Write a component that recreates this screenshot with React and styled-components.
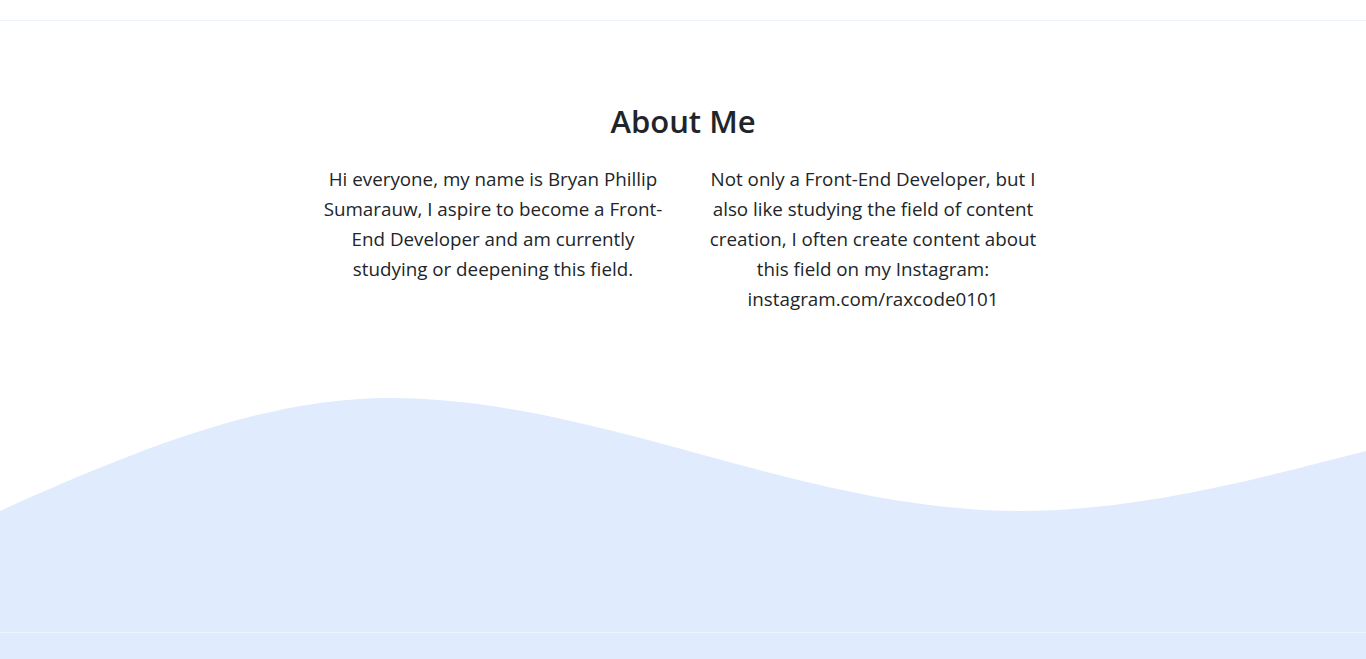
import React from "react";
import styled, { createGlobalStyle } from "styled-components";

const GlobalStyle = createGlobalStyle`
  html, body {
    margin: 0;
    padding: 0;
    background: #ffffff;
    font-family: "Open Sans", "Noto Sans", sans-serif;
    color: #212529;
  }
`;

const Page = styled.div`
  display: flex;
  flex-direction: column;
  min-height: 659px;
  overflow: hidden;
`;

const TopBar = styled.div`
  height: 20px;
  border-bottom: 1px solid #eef4fe;
`;

const AboutSection = styled.section`
  padding: 81px 0 0;
  display: flex;
  flex-direction: column;
  align-items: center;
`;

const Title = styled.h2`
  margin: 0;
  font-size: 31px;
  line-height: 38px;
  font-weight: 600;
  color: #212529;
`;

const Columns = styled.div`
  display: grid;
  grid-template-columns: 380px 380px;
  margin-top: 24px;
`;

const Column = styled.p`
  margin: 0;
  padding: 0 12px;
  text-align: center;
  font-size: 18.8px;
  line-height: 30px;
  color: #212529;
`;

const Wave = styled.svg`
  display: block;
  width: 100%;
  height: 234px;
  margin-top: 84px;
`;

const Footer = styled.footer`
  flex: 1;
  min-height: 27px;
  background: #e0ebfe;
  border-top: 1px solid #eef4ff;
`;

export default function App() {
  return (
    <Page>
      <GlobalStyle />
      <TopBar />
      <AboutSection>
        <Title>About Me</Title>
        <Columns>
          <Column>
            Hi everyone, my name is Bryan Phillip Sumarauw, I aspire to become a
            Front-End Developer and am currently studying or deepening this field.
          </Column>
          <Column>
            Not only a Front-End Developer, but I also like studying the field of
            content creation, I often create content about this field on my
            Instagram: instagram.com/raxcode0101
          </Column>
        </Columns>
      </AboutSection>
      <Wave viewBox="0 0 1366 234" preserveAspectRatio="none">
        <path
          fill="#e0ebfe"
          d="M0,113 C130,55 260,0 390,0 C600,0 800,113 1020,113 C1140,113 1260,80 1366,53 L1366,234 L0,234 Z"
        />
      </Wave>
      <Footer />
    </Page>
  );
}
